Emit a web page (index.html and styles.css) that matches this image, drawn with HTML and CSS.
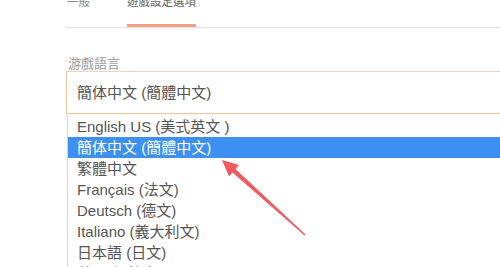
FILE: index.html
```html
<!DOCTYPE html>
<html lang="zh-Hant">
<head>
<meta charset="utf-8">
<title>遊戲語言</title>
<link rel="stylesheet" href="styles.css">
</head>
<body>
<div class="page">
  <nav class="tabs">
    <div class="tab">一般</div>
    <div class="tab active">遊戲設定選項</div>
  </nav>
  <div class="field">
    <div class="label">游戲語言</div>
    <div class="select">簡体中文 (簡體中文)</div>
    <ul class="options">
      <li>English US (美式英文 )</li>
      <li class="selected">簡体中文 (簡體中文)</li>
      <li>繁體中文</li>
      <li>Français (法文)</li>
      <li>Deutsch (德文)</li>
      <li>Italiano (義大利文)</li>
      <li>日本語 (日文)</li>
      <li>한국어 (韓文)</li>
    </ul>
  </div>
</div>
<svg class="arrow" width="500" height="267" viewBox="0 0 500 267">
  <polygon points="222,160 239,165 235.5,169 305.6,234.6 304.6,235.6 232.4,172.5 229,176.5" fill="#ec4a4f" opacity="0.9"/>
</svg>
</body>
</html>
```

FILE: styles.css
```css
html, body {
  margin: 0;
  padding: 0;
  background: #ffffff;
  overflow: hidden;
  width: 500px;
  height: 267px;
}
body {
  font-family: "Liberation Sans", "Noto Sans CJK TC", sans-serif;
  color: #555555;
}
.page {
  padding-left: 66px;
  width: 480px;
}
.tabs {
  display: flex;
  gap: 36px;
  margin-top: -5px;
  height: 32px;
  border-bottom: 1px solid #e8e8e8;
  box-shadow: 0 1px 1px rgba(0,0,0,0.03);
}
.tab {
  font-size: 11.5px;
  line-height: 14px;
  color: #8a8a8a;
  white-space: nowrap;
  padding: 0 1px;
}
.tab.active {
  color: #666666;
  padding: 0;
  height: 29px;
  border-bottom: 3px solid #f3a182;
}
.field {
  padding-top: 28px;
}
.label {
  font-size: 13px;
  line-height: 15px;
  color: #9a9a9a;
  padding-left: 2px;
  height: 15px;
}
.select {
  height: 41px;
  border: 1px solid #efc7a4;
  border-top-color: #e6d6c6;
  box-shadow: 0 0 2px rgba(240, 170, 110, 0.35);
  font-size: 15px;
  line-height: 41px;
  padding-left: 10px;
  color: #555555;
}
.options {
  list-style: none;
  margin: 1px 0 0 1px;
  padding: 1px 0 0 0;
  border-left: 1px solid #d4d4d4;
}
.options li {
  height: 21px;
  line-height: 21px;
  font-size: 15px;
  padding-left: 9px;
  color: #555555;
  white-space: nowrap;
}
.options li.selected {
  background: #3d90f0;
  color: #ffffff;
}
.arrow {
  position: absolute;
  left: 0;
  top: 0;
  pointer-events: none;
}
```
